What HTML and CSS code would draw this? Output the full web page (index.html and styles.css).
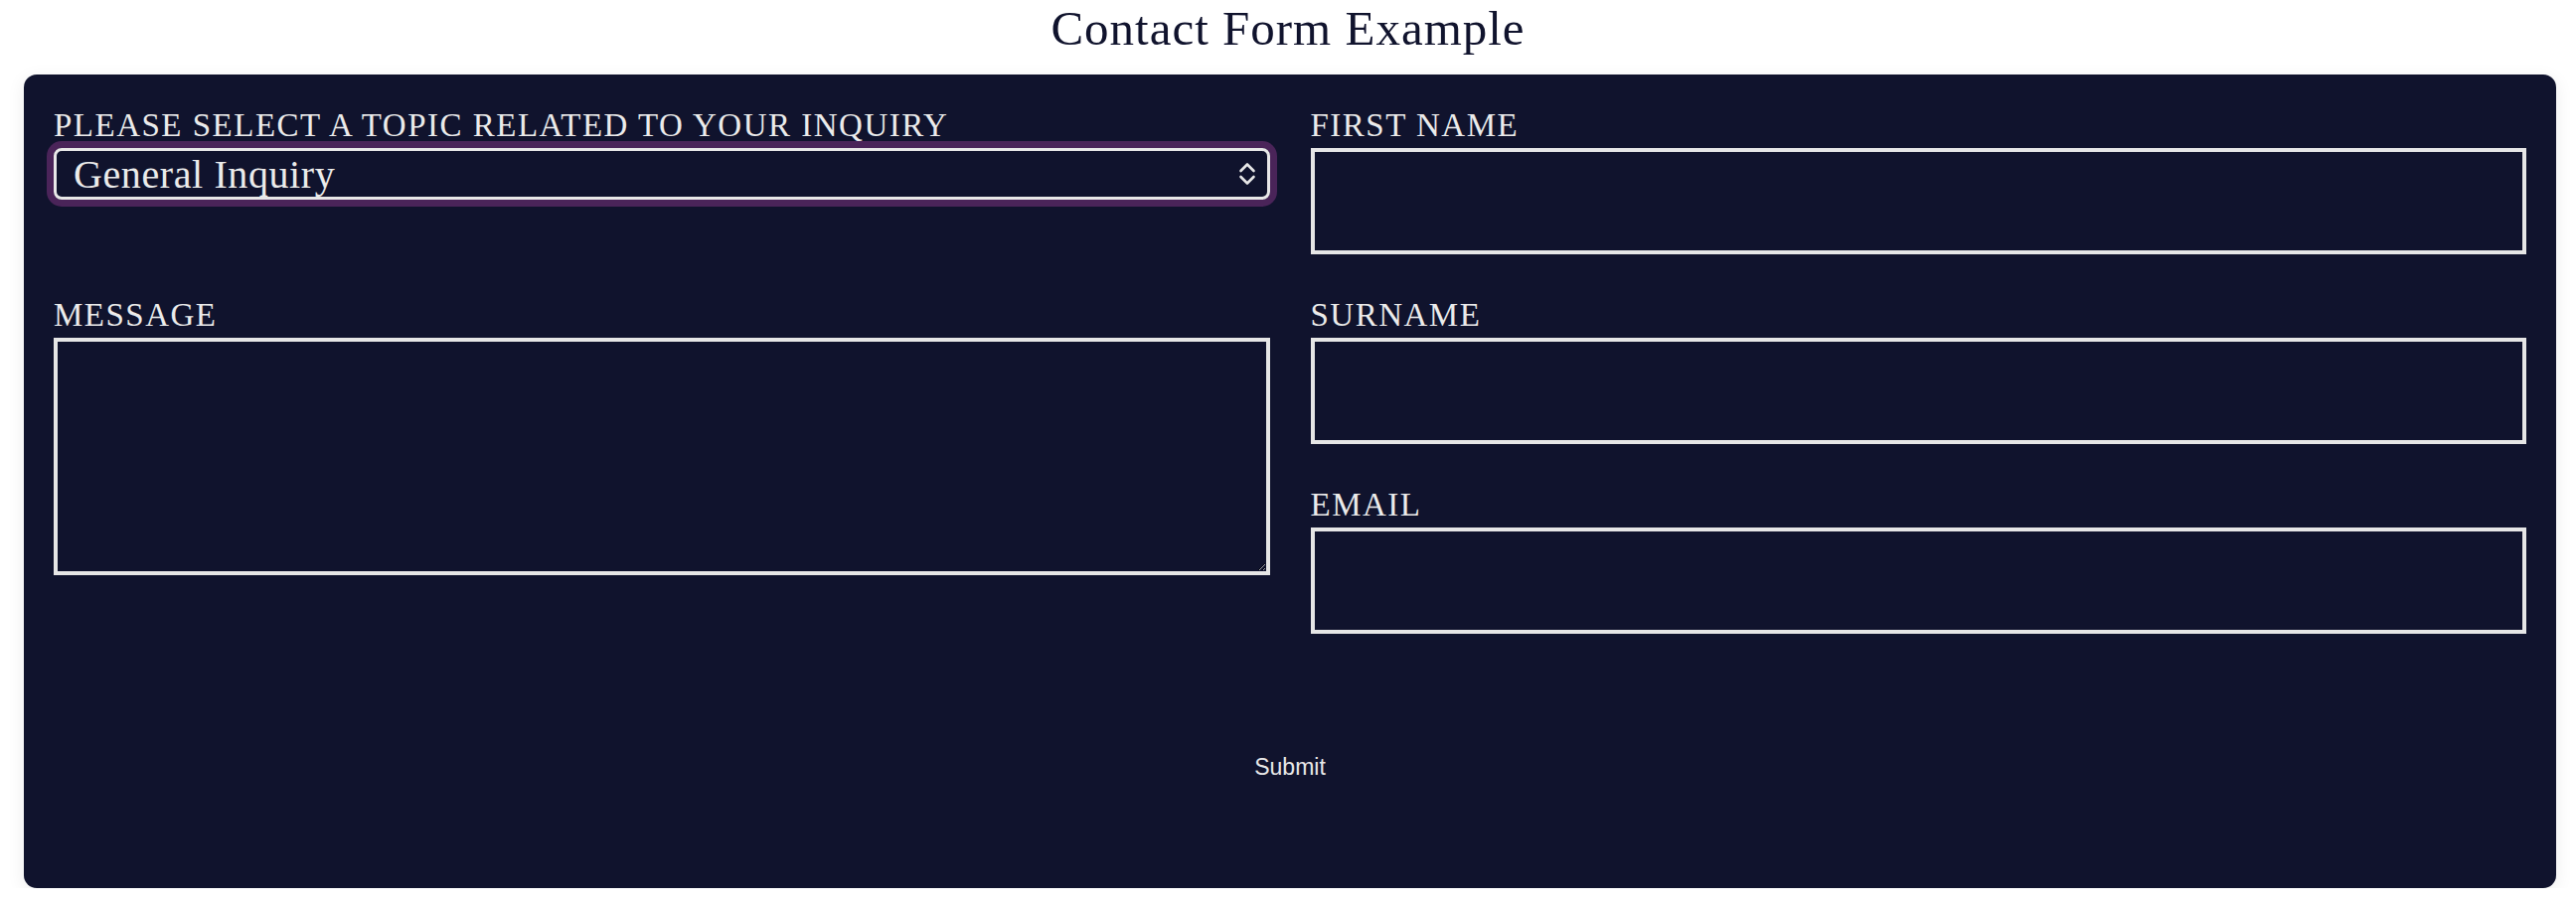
FILE: index.html
```html
<!DOCTYPE html>
<html lang="en">

<head>
	<meta charset="UTF-8" />
	<meta name="viewport" content="width=device-width, initial-scale=1.0" />
	<title>Contact Form Example</title>
	<link rel="stylesheet" href="styles.css">
</head>

<body>
	<h1 class="title">Contact Form Example</h1>

	<form class="card" id="contactForm">
		<div class="fields">
			<!-- topic picker -->
			<div class="field">
				<label class="label" for="topic">Please select a topic related to your inquiry</label>
				<div class="select-wrap">
					<select id="topic" class="select">
						<option>General Inquiry</option>
						<option>Support</option>
						<option>Billing</option>
						<option>Feedback</option>
					</select>
					<svg class="chevrons" width="18" height="24" viewBox="0 0 18 24" fill="none" stroke="currentColor" stroke-width="2.6" stroke-linecap="round" stroke-linejoin="round">
						<path d="M2.5 9 L9 2.5 L15.5 9" />
						<path d="M2.5 15 L9 21.5 L15.5 15" />
					</svg>
				</div>
			</div>

			<div class="field">
				<label class="label" for="firstName">First name</label>
				<input type="text" id="firstName" class="input">
			</div>

			<div class="field field-message">
				<label class="label" for="message">Message</label>
				<textarea id="message" class="textarea"></textarea>
			</div>

			<div class="field">
				<label class="label" for="surname">Surname</label>
				<input type="text" id="surname" class="input">
			</div>

			<div class="field">
				<label class="label" for="email">Email</label>
				<input type="email" id="email" class="input">
			</div>
		</div>

		<div class="actions">
			<button type="submit" class="submit">Submit</button>
		</div>
	</form>
</body>

</html>
```

FILE: styles.css
```css
body {
	margin: 0;
	background: #ffffff;
	font-family: "Liberation Serif", "Times New Roman", serif;
}

.title {
	margin: 0 0 20px;
	padding-top: 3px;
	font-size: 49px;
	font-weight: normal;
	line-height: 52px;
	letter-spacing: 1px;
	text-align: center;
	color: #10132d;
}

.card {
	margin: 0 20px 0 24px;
	padding: 33px 30px;
	background-color: #10132d;
	border-radius: 13px;
	box-shadow: 0 4px 18px rgba(0, 0, 0, 0.08);
}

.fields {
	display: grid;
	grid-template-columns: 1fr 1fr;
	column-gap: 41px;
	row-gap: 43px;
	align-items: start;
}

.field-message {
	grid-row: span 2;
}

.label {
	display: block;
	margin-bottom: 5px;
	font-size: 33px;
	line-height: 36px;
	letter-spacing: 1.5px;
	text-transform: uppercase;
	color: #ebebeb;
}

.select-wrap {
	position: relative;
	margin-top: 1px;
}

.select {
	display: block;
	width: 100%;
	height: 52px;
	box-sizing: border-box;
	padding: 0 50px 0 17px;
	appearance: none;
	-webkit-appearance: none;
	background: transparent;
	border: 3px solid #e8e8e8;
	border-radius: 8px;
	box-shadow: 0 0 0 7px #4a2459;
	outline: none;
	font-family: inherit;
	font-size: 40px;
	letter-spacing: 0.6px;
	color: #ebebeb;
}

.select option {
	color: #10132d;
}

/* up/down arrows over the right end of the select */
.chevrons {
	position: absolute;
	right: 14px;
	top: 14px;
	color: #e8e8e8;
	pointer-events: none;
}

.input,
.textarea {
	display: block;
	width: 100%;
	box-sizing: border-box;
	margin: 0;
	padding: 10px 14px;
	background: transparent;
	border: 4px solid #e6e6e6;
	border-radius: 0;
	outline: none;
	font-family: inherit;
	font-size: 30px;
	color: #ebebeb;
}

.input {
	height: 107px;
}

.textarea {
	height: 239px;
}

.actions {
	padding: 121px 0 75px;
}

.submit {
	display: block;
	margin: 0 auto;
	padding: 0;
	background: none;
	border: none;
	cursor: pointer;
	font-family: "Liberation Sans", Arial, sans-serif;
	font-size: 23px;
	line-height: normal;
	color: #e8e8e8;
}
```
